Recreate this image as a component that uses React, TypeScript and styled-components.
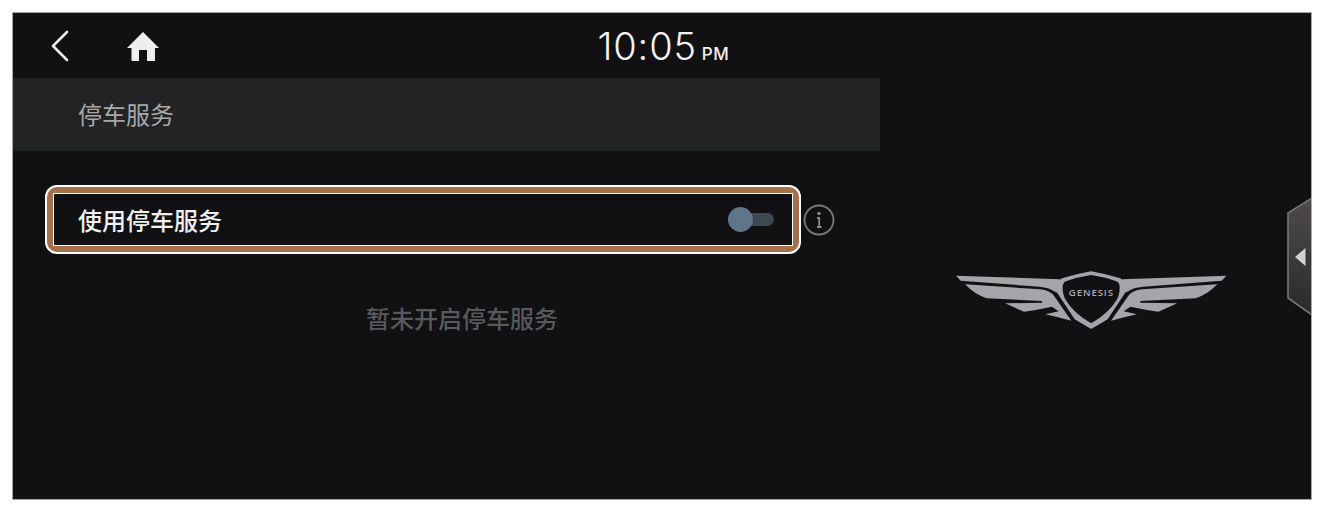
import React from "react";
import styled, { createGlobalStyle } from "styled-components";

const CJK = `"Noto Sans CJK SC", "Noto Sans", sans-serif`;

const GlobalStyle = createGlobalStyle`
  html, body {
    margin: 0;
    padding: 0;
    height: 100%;
    background: #fff;
  }
  body {
    font-family: ${CJK};
  }
`;

const Page = styled.div`
  width: 1323px;
  height: 510px;
  padding: 12px 11px 10px 12px;
  box-sizing: border-box;
`;

const Screen = styled.div`
  position: relative;
  height: 100%;
  box-sizing: border-box;
  border: 1px solid #a9a9a9;
  background: #111113;
  overflow: hidden;
`;

const TopBar = styled.div`
  display: grid;
  grid-template-columns: 1fr auto 1fr;
  align-items: center;
  height: 65px;
`;

const NavGroup = styled.div`
  display: flex;
  align-items: center;
  gap: 56px;
  padding-left: 37px;
`;

const NavIcon = styled.svg`
  display: block;
  color: #eeeeee;
`;

const Clock = styled.div`
  display: flex;
  align-items: baseline;
  gap: 5px;
  color: #f2f2f2;
  font-family: "Inter", "Liberation Sans", sans-serif;
  font-weight: 300;
  font-size: 38px;
  letter-spacing: 0.8px;
  line-height: 1;
  margin-left: 3px;
`;

const Meridiem = styled.span`
  font-size: 17px;
  font-weight: 500;
  letter-spacing: 0.6px;
`;

const Body = styled.div`
  display: grid;
  grid-template-columns: 867px 1fr;
`;

const Content = styled.div`
  display: flex;
  flex-direction: column;
`;

const TitleBar = styled.div`
  display: flex;
  align-items: center;
  height: 73px;
  padding: 0 0 2px 65px;
  box-sizing: border-box;
  background: #222325;
  color: #a8a8a8;
  font-size: 24px;
`;

const OptionLine = styled.div`
  display: flex;
  align-items: center;
  gap: 1px;
  margin: 34px 0 0 32px;
`;

const Highlight = styled.div`
  width: 756px;
  height: 69px;
  box-sizing: border-box;
  padding: 6px;
  border: 2px solid #fff;
  border-radius: 12px;
  background: #a5704a;
`;

const OptionRow = styled.div`
  display: flex;
  align-items: center;
  justify-content: space-between;
  height: 100%;
  box-sizing: border-box;
  padding: 0 18px 0 24px;
  border: 1px solid #fff;
  background: #111113;
  color: #f0f0f0;
  font-size: 24px;
  font-weight: 500;
`;

const Toggle = styled.div`
  position: relative;
  width: 46px;
  height: 13px;
  border-radius: 7px;
  background: #3c4852;
`;

const Knob = styled.div`
  position: absolute;
  left: 0;
  top: -6px;
  width: 25px;
  height: 25px;
  border-radius: 50%;
  background: #5f7589;
`;

const Message = styled.div`
  margin: 46px 0 0 353px;
  color: #58595d;
  font-size: 24px;
  font-weight: 500;
  line-height: 36px;
`;

const BrandPanel = styled.div`
  display: flex;
  justify-content: center;
  padding: 172px 11px 0 0;
`;

const DrawerHandle = styled.svg`
  position: absolute;
  right: 0;
  top: 185px;
`;

const GenesisLogo = () => {
  const wing = (
    <>
      <path d="M48 77 L360 88 L350 128 Q328 112 298 110 L62 92 Z" />
      <path d="M75 103 L300 118 Q331 121 343 139 L394 212 Q352 201 316 193 L356 184 L336 170 Q290 180 252 185 L195 160 L306 158 L306 153 L140 145 Q105 134 75 103 Z" />
    </>
  );
  return (
    <svg width="300" height="100" viewBox="0 0 900 300" aria-label="Genesis">
      <g fill="#a5a4aa">
        {wing}
        <g transform="translate(907 0) scale(-1 1)">{wing}</g>
        <path
          fillRule="evenodd"
          d="M453.5 64 Q500 72 541 85 Q556 90 557 126 L503 208 L453.5 237 L404 208 L350 126 Q351 90 366 85 Q407 72 453.5 64 Z
             M453.5 75 Q412 81 378 94 Q368 98 368 112 Q368 135 376 148 Q400 190 453.5 220 Q507 190 531 148 Q539 135 539 112 Q539 98 529 94 Q495 81 453.5 75 Z"
        />
      </g>
      <text
        x="454"
        y="138"
        textAnchor="middle"
        fill="#a9a8ae"
        fontFamily="'Open Sans', sans-serif"
        fontSize="29"
        letterSpacing="2.6"
        fontWeight="600"
      >
        GENESIS
      </text>
    </svg>
  );
};

const App: React.FC = () => (
  <Page>
    <GlobalStyle />
    <Screen>
      <TopBar>
        <NavGroup>
          <NavIcon width="20" height="32" viewBox="0 0 20 32" fill="none">
            <path d="M17 2 L3 16 L17 30" stroke="currentColor" strokeWidth="2.6" strokeLinecap="round" strokeLinejoin="round" />
          </NavIcon>
          <NavIcon width="34" height="30" viewBox="0 0 34 30" fill="currentColor">
            <path d="M17 1 L33 17 L29 17 L29 30 L21 30 L21 19 L13 19 L13 30 L5.5 30 L5.5 17 L1 17 Z" />
          </NavIcon>
        </NavGroup>
        <Clock>
          10:05<Meridiem>PM</Meridiem>
        </Clock>
        <div />
      </TopBar>
      <Body>
        <Content>
          <TitleBar>停车服务</TitleBar>
          <OptionLine>
            <Highlight>
              <OptionRow>
                使用停车服务
                <Toggle>
                  <Knob />
                </Toggle>
              </OptionRow>
            </Highlight>
            <svg width="34" height="34" viewBox="0 0 34 34" fill="none">
              <circle cx="17" cy="17" r="14.5" stroke="#77787a" strokeWidth="1.8" />
              <circle cx="17" cy="10.5" r="1.7" fill="#8a8b8d" />
              <path d="M15 15 H17.2 V24 M15 24 H19.5" stroke="#8a8b8d" strokeWidth="1.8" />
            </svg>
          </OptionLine>
          <Message>暂未开启停车服务</Message>
        </Content>
        <BrandPanel>
          <GenesisLogo />
        </BrandPanel>
      </Body>
      <DrawerHandle width="24" height="118" viewBox="0 0 24 118">
        <defs>
          <linearGradient id="handleFill" x1="0" y1="0" x2="0" y2="1">
            <stop offset="0" stopColor="#4f4b4c" />
            <stop offset="1" stopColor="#2a292b" />
          </linearGradient>
        </defs>
        <path d="M25 0 L1 15 V100 L25 117 Z" fill="url(#handleFill)" stroke="#77767a" strokeWidth="1.6" />
        <path d="M8 59 L18.5 50 V68 Z" fill="#d2d2d4" />
      </DrawerHandle>
    </Screen>
  </Page>
);

export default App;
